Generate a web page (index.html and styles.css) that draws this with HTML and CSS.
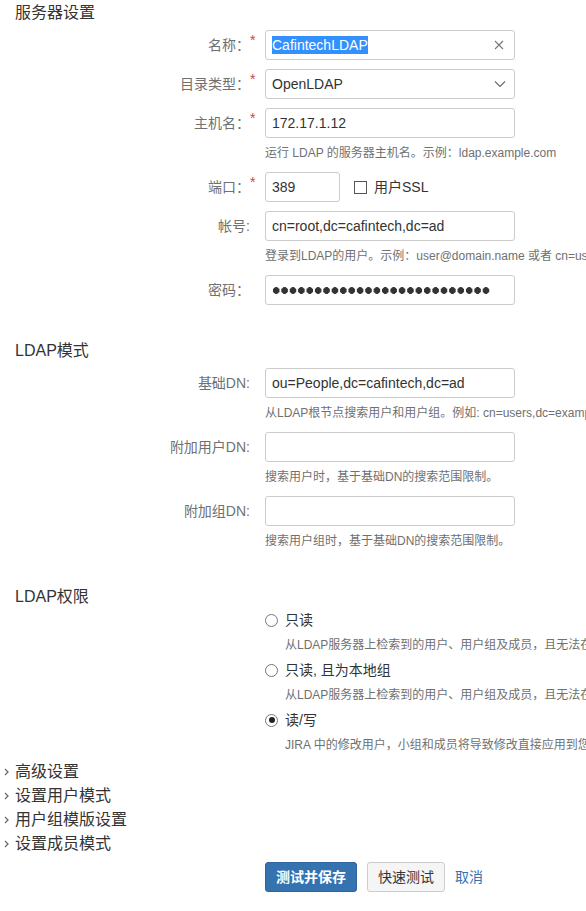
FILE: index.html
```html
<!DOCTYPE html>
<html lang="zh-CN">
<head>
<meta charset="utf-8">
<title>LDAP 服务器设置</title>
<link rel="stylesheet" href="styles.css">
</head>
<body>
<form class="page">
  <section class="group">
    <h2 class="group-title">服务器设置</h2>
    <div class="field">
      <label class="field-label">名称：<span class="req">*</span></label>
      <div class="field-body">
        <div class="text-input has-icon"><span class="selected">CafintechLDAP</span>
          <svg class="input-icon clear" width="10" height="10" viewBox="0 0 10 10"><path d="M1 1L9 9M9 1L1 9" stroke="#777" stroke-width="1.1" fill="none"/></svg>
        </div>
      </div>
    </div>
    <div class="field">
      <label class="field-label">目录类型：<span class="req">*</span></label>
      <div class="field-body">
        <div class="text-input has-icon">OpenLDAP
          <svg class="input-icon chevron" width="12" height="7" viewBox="0 0 12 7"><path d="M1 1L6 6L11 1" stroke="#666" stroke-width="1.1" fill="none"/></svg>
        </div>
      </div>
    </div>
    <div class="field">
      <label class="field-label">主机名：<span class="req">*</span></label>
      <div class="field-body">
        <div class="text-input">172.17.1.12</div>
        <div class="help">运行 LDAP 的服务器主机名。示例：ldap.example.com</div>
      </div>
    </div>
    <div class="field">
      <label class="field-label">端口：<span class="req">*</span></label>
      <div class="field-body inline">
        <div class="text-input short">389</div>
        <label class="check"><span class="checkbox"></span>用户SSL</label>
      </div>
    </div>
    <div class="field">
      <label class="field-label">帐号:</label>
      <div class="field-body">
        <div class="text-input">cn=root,dc=cafintech,dc=ad</div>
        <div class="help">登录到LDAP的用户。示例：user@domain.name 或者 cn=user,dc=domain,dc=name</div>
      </div>
    </div>
    <div class="field">
      <label class="field-label">密码：</label>
      <div class="field-body">
        <div class="text-input"><span class="dots"></span></div>
      </div>
    </div>
  </section>

  <section class="group">
    <h2 class="group-title">LDAP模式</h2>
    <div class="field">
      <label class="field-label">基础DN:</label>
      <div class="field-body">
        <div class="text-input">ou=People,dc=cafintech,dc=ad</div>
        <div class="help">从LDAP根节点搜索用户和用户组。例如: cn=users,dc=example,dc=com</div>
      </div>
    </div>
    <div class="field">
      <label class="field-label">附加用户DN:</label>
      <div class="field-body">
        <div class="text-input"></div>
        <div class="help">搜索用户时，基于基础DN的搜索范围限制。</div>
      </div>
    </div>
    <div class="field">
      <label class="field-label">附加组DN:</label>
      <div class="field-body">
        <div class="text-input"></div>
        <div class="help">搜索用户组时，基于基础DN的搜索范围限制。</div>
      </div>
    </div>
  </section>

  <section class="group perms">
    <h2 class="group-title">LDAP权限</h2>
    <div class="radios">
      <div class="radio-item">
        <label class="radio-label"><span class="radio"></span>只读</label>
        <div class="radio-desc">从LDAP服务器上检索到的用户、用户组及成员，且无法在JIRA中修改。</div>
      </div>
      <div class="radio-item">
        <label class="radio-label"><span class="radio"></span>只读, 且为本地组</label>
        <div class="radio-desc">从LDAP服务器上检索到的用户、用户组及成员，且无法在JIRA中修改。</div>
      </div>
      <div class="radio-item">
        <label class="radio-label"><span class="radio checked"></span>读/写</label>
        <div class="radio-desc">JIRA 中的修改用户，小组和成员将导致修改直接应用到您的LDAP中。</div>
      </div>
    </div>
  </section>

  <ul class="toggles">
    <li><svg class="arrow" width="5" height="8" viewBox="0 0 5 8"><path d="M1 1L4 4L1 7" stroke="#666" stroke-width="1.2" fill="none"/></svg>高级设置</li>
    <li><svg class="arrow" width="5" height="8" viewBox="0 0 5 8"><path d="M1 1L4 4L1 7" stroke="#666" stroke-width="1.2" fill="none"/></svg>设置用户模式</li>
    <li><svg class="arrow" width="5" height="8" viewBox="0 0 5 8"><path d="M1 1L4 4L1 7" stroke="#666" stroke-width="1.2" fill="none"/></svg>用户组模版设置</li>
    <li><svg class="arrow" width="5" height="8" viewBox="0 0 5 8"><path d="M1 1L4 4L1 7" stroke="#666" stroke-width="1.2" fill="none"/></svg>设置成员模式</li>
  </ul>

  <div class="buttons">
    <button type="button" class="btn primary">测试并保存</button>
    <button type="button" class="btn">快速测试</button>
    <a class="cancel" href="#">取消</a>
  </div>
</form>
</body>
</html>
```
FILE: styles.css
```css
html, body {
  margin: 0;
  padding: 0;
  background: #fff;
  overflow: hidden;
}
body {
  font-family: "Liberation Sans", "Noto Sans CJK SC", sans-serif;
  font-size: 14px;
  color: #333;
}
.page {
  padding-top: 3px;
  width: 586px;
}
.group {
  margin-bottom: 36px;
}
.group-title {
  margin: 0 0 7px 15px;
  font-size: 16px;
  line-height: 20px;
  height: 20px;
  font-weight: normal;
  color: #333;
}
.field {
  display: grid;
  grid-template-columns: 250px 250px;
  column-gap: 15px;
  margin-bottom: 9px;
}
.field-label {
  position: relative;
  text-align: right;
  line-height: 30px;
  height: 30px;
  font-size: 14px;
  color: #707070;
  white-space: nowrap;
}
.req {
  position: absolute;
  left: 100%;
  top: 3px;
  font-size: 14px;
  line-height: 14px;
  color: #d04437;
}
.field-body {
  min-width: 0;
}
.field-body.inline {
  display: flex;
  align-items: center;
}
.text-input {
  position: relative;
  box-sizing: border-box;
  width: 250px;
  height: 30px;
  border: 1px solid #ccc;
  border-radius: 3px;
  padding: 0 6px;
  font-size: 14px;
  line-height: 28px;
  color: #333;
  background: #fff;
  white-space: nowrap;
}
.text-input.short {
  width: 75px;
  flex: none;
}
.selected {
  background: #3390ff;
  color: #fff;
  padding: 1px 0;
}
.input-icon {
  position: absolute;
  top: 50%;
  transform: translateY(-50%);
}
.clear {
  right: 10px;
}
.chevron {
  right: 8px;
}
.dots {
  display: inline-block;
  vertical-align: middle;
  width: 219px;
  height: 9px;
  margin-top: -2px;
  background-image: radial-gradient(circle, #333 3.1px, transparent 3.6px);
  background-size: 8.4px 9px;
  background-repeat: repeat-x;
}
.help {
  margin-top: 5px;
  font-size: 12px;
  line-height: 20px;
  height: 20px;
  color: #707070;
  white-space: nowrap;
}
.check {
  display: flex;
  align-items: center;
  margin-left: 14px;
  line-height: 30px;
  color: #333;
  white-space: nowrap;
}
.checkbox {
  box-sizing: border-box;
  width: 13px;
  height: 13px;
  border: 1px solid #555;
  background: #fff;
  margin-right: 7px;
}
.perms .group-title {
  margin-bottom: 3px;
}
.perms {
  margin-bottom: 0;
}
.radios {
  padding-left: 265px;
}
.radio-item {
  margin-bottom: 5px;
}
.radio-label {
  display: flex;
  align-items: center;
  line-height: 20px;
  height: 20px;
  color: #333;
  white-space: nowrap;
}
.radio {
  position: relative;
  box-sizing: border-box;
  width: 13px;
  height: 13px;
  border: 1px solid #777;
  border-radius: 50%;
  background: #fff;
  margin-right: 7px;
  flex: none;
}
.radio.checked::after {
  content: "";
  position: absolute;
  left: 2.5px;
  top: 2.5px;
  width: 6px;
  height: 6px;
  border-radius: 50%;
  background: #222;
}
.radio-desc {
  margin: 5px 0 0 20px;
  font-size: 12px;
  line-height: 20px;
  height: 20px;
  color: #707070;
  white-space: nowrap;
}
.toggles {
  list-style: none;
  margin: 0;
  padding: 0;
}
.toggles li {
  position: relative;
  padding-left: 15px;
  font-size: 16px;
  line-height: 24px;
  height: 24px;
  color: #333;
}
.arrow {
  position: absolute;
  left: 4px;
  top: 8px;
}
.buttons {
  margin-top: 6px;
  padding-left: 265px;
  display: flex;
  align-items: center;
  column-gap: 10px;
}
.btn {
  box-sizing: border-box;
  height: 30px;
  padding: 0 10px;
  border: 1px solid #ccc;
  border-radius: 3px;
  background: #f5f5f5;
  color: #333;
  font-family: "Liberation Sans", "Noto Sans CJK SC", sans-serif;
  font-size: 14px;
  line-height: 28px;
  cursor: pointer;
}
.btn.primary {
  background: #3572b0;
  border-color: #2f659c;
  color: #fff;
  font-weight: bold;
}
.cancel {
  color: #3572b0;
  text-decoration: none;
  font-size: 14px;
  line-height: 30px;
}
```
